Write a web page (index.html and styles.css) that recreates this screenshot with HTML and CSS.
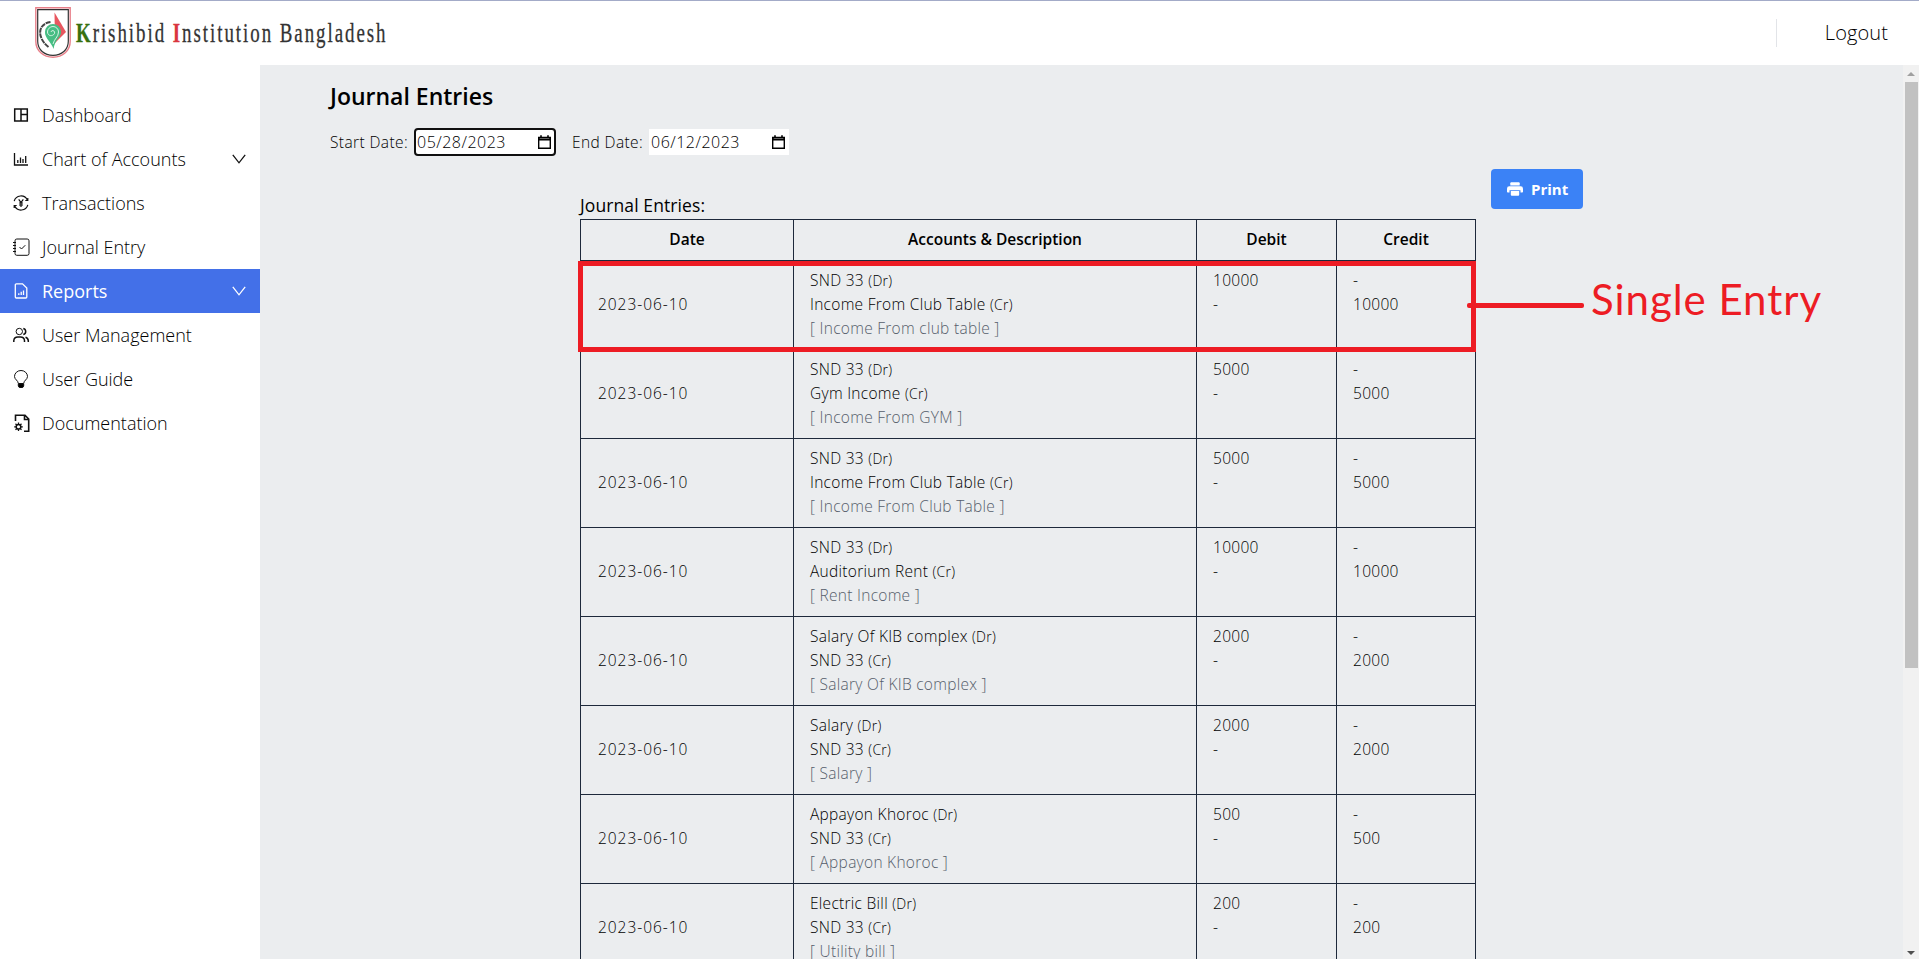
FILE: index.html
```html
<!DOCTYPE html>
<html lang="en">
<head>
<meta charset="utf-8">
<title>Journal Entries</title>
<link rel="stylesheet" href="styles.css">
</head>
<body>
<header class="topbar">
  <div class="brand">
    <svg class="crest" viewBox="0 0 36 51" width="36" height="51">
      <path d="M.8.8h34.4v33.5c0 9.5-7.5 15.9-17.2 15.9S.8 43.800.8 34.300z" fill="#fff" stroke="#e8808a" stroke-width="1.4"/>
      <path d="M2.700 2.700h30.600v31.600c0 8.500-6.700 14-15.300 14s-15.300-5.500-15.300-14z" fill="none" stroke="#333" stroke-width="1.200"/>
      <path d="M19.500 5.500L31 25 20 36z" fill="#e8565f"/>
      <path d="M15.500 15C2 17 2 31 13.500 40" fill="none" stroke="#444" stroke-width="2" stroke-dasharray="5 .7"/>
      <path d="M18.500 42C17 36 9.500 31 10 25a8 8 0 0 1 16 0c0 6-6 7-7.500 17z" fill="#46bd83"/>
      <path d="M18 37c1-5 5.500-7 5.500-12a5.500 5.500 0 0 0-11 0c0 4 5 5 7 1.500 1-3-3-4-3.500-1.500" fill="none" stroke="#d9f3e6" stroke-width="1"/>
    </svg>
    <span class="brand-name"><b class="green">K</b>rishibid <b class="red">I</b>nstitution Bangladesh</span>
  </div>
  <div class="logout"><span>Logout</span></div>
</header>
<div class="body">
  <nav class="sidebar">
    <a class="item"><svg class="icon" viewBox="0 0 16 16"><path d="M1.700 2h12.600v12H1.700zM8 2v12M8 7.500h6.300" stroke-width="1.500"/></svg><span>Dashboard</span></a>
    <a class="item"><svg class="icon" viewBox="0 0 16 16"><path d="M1.500 2v12h13.500M4.800 12V9M7.500 12V6.500M10 12V8M12.700 12V5" stroke-width="1.300"/></svg><span>Chart of Accounts</span><svg class="chev" viewBox="0 0 14 10"><path d="M.8.8L7 8.800 13.200.8"/></svg></a>
    <a class="item"><svg class="icon" viewBox="0 0 16 16"><path d="M1.200 6.200A7 7 0 0 1 14.300 5M14.800 9.800A7 7 0 0 1 1.700 11M14.800 3v2.500h-2.500M1.200 13v-2.500h2.500M5.700 4.300L8 7.500l2.300-3.200M8 7.500V12M6 8h4M6 10h4" stroke-width="1.200"/></svg><span>Transactions</span></a>
    <a class="item"><svg class="icon big" viewBox="0 0 18 18"><rect x="3" y="1" width="14" height="16.300" rx="1.800"/><path d="M1 4.500h3M1 7.500h3M1 10.500h3M1 13.500h3M7.500 9l2 2 3.800-3.800"/></svg><span>Journal Entry</span></a>
    <a class="item active"><svg class="icon" viewBox="0 0 16 16"><path d="M3.300.8h6.200l4.300 4.200v9a1 1 0 0 1-1 1H3.300a1 1 0 0 1-1-1V1.800a1 1 0 0 1 1-1zM5.800 12v-1.700M8.200 12V8.800M10.500 12V7.500" stroke-width="1.300"/></svg><span>Reports</span><svg class="chev" viewBox="0 0 14 10"><path d="M.8.8L7 8.800 13.200.8"/></svg></a>
    <a class="item"><svg class="icon" viewBox="0 0 16 16"><circle cx="6.300" cy="4.500" r="3.200"/><path d="M.8 15v-1.500a4 4 0 0 1 4-3.500h2.700a4 4 0 0 1 4 3.500V15M10.300 1.400a3.200 3.200 0 0 1 0 6.200M12.500 10.300a4 4 0 0 1 2.800 3.400V15" stroke-width="1.500"/></svg><span>User Management</span></a>
    <a class="item"><svg class="icon big" viewBox="0 0 18 18"><path d="M6.300 13.500C6.300 10.500 2.500 9.500 2.500 6.500a6.500 6 0 0 1 13 0c0 3-3.800 4-3.800 7z"/><path d="M6.300 14h5.400v2l-1 1.500H7.300l-1-1.500z" fill="#000"/></svg><span>User Guide</span></a>
    <a class="item"><svg class="icon big" viewBox="0 0 18 18"><path d="M3.500 7V1.300H13l3.700 3.700v12.300H12M12.500 1.500v4h4" stroke-width="1.600"/><circle cx="6.500" cy="12.800" r="2.300" stroke-width="1.500"/><path d="M6.500 8.500v2M6.500 15.100v2M2.200 12.800h2M8.800 12.800h2M3.500 9.800l1.300 1.300M8.200 14.500l1.300 1.300M9.500 9.800l-1.300 1.300M4.800 14.500l-1.300 1.300" stroke-width="1.300"/></svg><span>Documentation</span></a>
  </nav>
  <main class="content">
    <h1>Journal Entries</h1>
    <div class="filters">
      <span class="start-label">Start Date:</span>
      <div class="date focus"><span>05/28/2023</span><svg viewBox="0 0 13 14"><path d="M.7 2.700h11.600v10.600H.7z"/><path d="M.7 2.500h11.600v2.300H.7zM3 .3v2M10 .3v2" stroke-width="1.600"/></svg></div>
      <span class="end-label">End Date:</span>
      <div class="date"><span>06/12/2023</span><svg viewBox="0 0 13 14"><path d="M.7 2.700h11.600v10.600H.7z"/><path d="M.7 2.500h11.600v2.300H.7zM3 .3v2M10 .3v2" stroke-width="1.600"/></svg></div>
    </div>
    <div class="report">
      <section>
        <div class="caption"><span>Journal Entries:</span></div>
        <div class="table">
          <div class="row head"><div>Date</div><div>Accounts &amp; Description</div><div>Debit</div><div>Credit</div></div>
          <div class="row"><div>2023-06-10</div><div>SND 33 <small>(Dr)</small><br>Income From Club Table <small>(Cr)</small><br><i>[ Income From club table ]</i></div><div>10000<br>-</div><div>-<br>10000</div><div class="mark"></div></div>
          <div class="row"><div>2023-06-10</div><div>SND 33 <small>(Dr)</small><br>Gym Income <small>(Cr)</small><br><i>[ Income From GYM ]</i></div><div>5000<br>-</div><div>-<br>5000</div></div>
          <div class="row"><div>2023-06-10</div><div>SND 33 <small>(Dr)</small><br>Income From Club Table <small>(Cr)</small><br><i>[ Income From Club Table ]</i></div><div>5000<br>-</div><div>-<br>5000</div></div>
          <div class="row"><div>2023-06-10</div><div>SND 33 <small>(Dr)</small><br>Auditorium Rent <small>(Cr)</small><br><i>[ Rent Income ]</i></div><div>10000<br>-</div><div>-<br>10000</div></div>
          <div class="row"><div>2023-06-10</div><div>Salary Of KIB complex <small>(Dr)</small><br>SND 33 <small>(Cr)</small><br><i>[ Salary Of KIB complex ]</i></div><div>2000<br>-</div><div>-<br>2000</div></div>
          <div class="row"><div>2023-06-10</div><div>Salary <small>(Dr)</small><br>SND 33 <small>(Cr)</small><br><i>[ Salary ]</i></div><div>2000<br>-</div><div>-<br>2000</div></div>
          <div class="row"><div>2023-06-10</div><div>Appayon Khoroc <small>(Dr)</small><br>SND 33 <small>(Cr)</small><br><i>[ Appayon Khoroc ]</i></div><div>500<br>-</div><div>-<br>500</div></div>
          <div class="row"><div>2023-06-10</div><div>Electric Bill <small>(Dr)</small><br>SND 33 <small>(Cr)</small><br><i>[ Utility bill ]</i></div><div>200<br>-</div><div>-<br>200</div></div>
        </div>
      </section>
      <aside>
        <button class="print"><svg viewBox="0 0 16 14"><path d="M3.300 3.500V1.300Q3.300.3 4.300.3h7.400q1 0 1 1v2.200z"/><path d="M2.500 4.300h11A2.400 2.400 0 0 1 16 6.700v3.100q0 .8-.8.800h-1.700V8.200H2.500v2.400H.8q-.8 0-.8-.8V6.700a2.400 2.400 0 0 1 2.500-2.400z"/><path d="M3.800 9h8.400v3.700q0 1-1 1H4.800q-1 0-1-1z"/></svg><span>Print</span></button>
        <div class="note">Single Entry</div>
      </aside>
    </div>
  </main>
  <div class="scrollbar"><svg viewBox="0 0 8 4"><path d="M4 0l4 4H0z" fill="#a0a0a0"/></svg><div class="thumb"></div><svg viewBox="0 0 8 4"><path d="M0 0h8L4 4z" fill="#505050"/></svg></div>
</div>
</body>
</html>
```
FILE: styles.css
```css
* { box-sizing: border-box; }
body { margin: 0; height: 959px; overflow: hidden; font-family: "Open Sans", sans-serif; color: #000; background: #fff; }
.topbar { height: 65px; border-top: 1px solid #a3abc8; display: flex; justify-content: space-between; background: #fff; }
.brand { display: flex; padding: 6px 0 0 35px; gap: 5px; }
.brand-name { padding-top: 5px; font: 28px/42px "Liberation Serif", serif; color: #333; -webkit-text-stroke: .3px currentColor; letter-spacing: 2.900px; white-space: nowrap; transform: scaleX(.675); transform-origin: 0 0; }
.brand-name b { font-weight: 700; }
.green { color: #37700f; }
.red { color: #d9363e; }
.logout { margin: 18px 31px 0 0; height: 28px; border-left: 1px solid #e2e4e8; padding-left: 48px; line-height: 27px; font-size: 20px; font-weight: 300; color: #000; letter-spacing: .1px; }
.body { display: flex; height: 894px; }
.sidebar { width: 260px; padding-top: 28px; flex: none; }
.item { display: flex; align-items: center; height: 44px; padding: 0 14px 0 12px; font-size: 18px; font-weight: 300; color: #000; }
.item span { flex: 1; margin-left: 12px; white-space: nowrap; line-height: 24px; padding-bottom: 1px; }
.icon { width: 18px; height: 16px; fill: none; stroke: #111; flex: none; }
.icon.big { height: 18px; }
.chev { width: 14px; height: 10px; fill: none; stroke: #111; stroke-width: 1.300; }
.active { background: #4370e8; color: #fff; font-weight: 400; }
.active svg { stroke: #fff; }
.content { flex: 1; background: #ebedef; padding: 13px 0 0 70px; overflow: hidden; }
h1 { margin: 0; font-size: 23px; line-height: 36px; font-weight: 600; color: #000; }
.filters { display: flex; align-items: center; margin-top: 15px; height: 26px; font-size: 15.500px; font-weight: 300; color: #000; white-space: nowrap; letter-spacing: .4px; }
.start-label { width: 85px; }
.end-label { width: 77px; margin-left: 17px; }
.filters span { line-height: 24px; padding-bottom: 1px; }
.date { width: 140px; height: 26px; background: #fff; display: flex; align-items: center; justify-content: space-between; padding: 0 4px 0 2px; font-size: 16px; letter-spacing: .5px; }
.focus { outline: 2px solid #101010; outline-offset: -1px; border-radius: 3px; }
.date svg { width: 13px; height: 14px; fill: none; stroke: #000; stroke-width: 1.400; }
.report { display: flex; gap: 15px; padding: 14px 0 0 250px; }
.caption { height: 50px; padding-top: 22px; line-height: 28px; font-size: 17.500px; color: #000; letter-spacing: .1px; }
.table { width: 896px; border: 1px solid #1e293b; color: #000; font-size: 15.500px; line-height: 24px; }
.row { display: grid; grid-template-columns: 212px 403px 140px 139px; height: 89px; border-bottom: 1px solid #1e293b; position: relative; white-space: nowrap; font-weight: 300; letter-spacing: .28px; }
.row > div { padding: 7px 16px; border-left: 1px solid #1e293b; }
.row > div:first-child { border-left: 0; padding: 31px 17px; letter-spacing: .95px; }
.row.head { height: 41px; font-weight: 600; color: #000; text-align: center; letter-spacing: 0; }
.row.head > div, .row.head > div:first-child { padding: 7px 0; letter-spacing: 0; }
small { font-size: 14px; line-height: 0; }
i { font-style: normal; color: #565e6b; }
.row > .mark { position: absolute; left: -3px; top: 0; width: 898px; height: 91px; border: 5px solid #ed1c24; padding: 0; z-index: 1; }
.mark::after { content: ""; position: absolute; left: 884px; top: 37px; width: 117px; height: 5px; border-radius: 2px; background: #ed1c24; }
.print { width: 92px; height: 40px; border: 0; border-radius: 4px; background: #3b82f6; color: #fff; font: 700 15px "Open Sans", sans-serif; display: flex; align-items: center; gap: 8px; padding: 0 16px; }
.print span { padding-bottom: 1px; }
.print svg { width: 16px; height: 14px; fill: #fff; flex: none; }
.note { font: 42px/50px Lato, sans-serif; color: #ed1c24; margin: 65px 0 0 100px; white-space: nowrap; letter-spacing: .95px; }
.scrollbar { width: 16px; flex: none; background: #f1f1f1; display: flex; flex-direction: column; align-items: center; padding: 7px 0 4px; }
.scrollbar svg { width: 8px; height: 4px; }
.thumb { width: 13px; height: 586px; background: #c1c1c1; margin: 6px 0 auto 1px; flex: none; }
```
